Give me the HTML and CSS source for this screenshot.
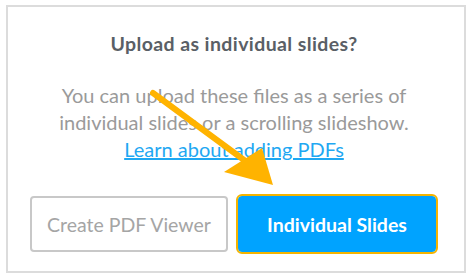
FILE: index.html
```html
<!DOCTYPE html>
<html lang="en">
  <head>
    <meta charset="UTF-8" />
    <meta name="viewport" content="width=device-width, initial-scale=1.0" />
    <title>Upload as individual slides?</title>

    <link rel="stylesheet" href="styles.css">
  </head>
  <body>
    <div class="dialog">
      <h2 class="title">Upload as individual slides?</h2>
      <p class="message">
        You can upload these files as a series of<br />
        individual slides or a scrolling slideshow.<br />
        <a href="#" class="link">Learn about adding PDFs</a>
      </p>
      <div class="actions">
        <button class="btn secondary">Create PDF Viewer</button>
        <button class="btn primary">Individual Slides</button>
      </div>

      <!-- annotation arrow -->
      <svg class="arrow" width="472" height="280" viewBox="0 0 472 280">
        <line x1="153" y1="93" x2="244" y2="160" stroke="#ffb300" stroke-width="6" stroke-linecap="round" />
        <polygon points="224,172 262,148 273,185" fill="#ffb300" />
      </svg>
    </div>
  </body>
</html>
```

FILE: styles.css
```css
* {
  margin: 0;
  padding: 0;
  box-sizing: border-box;
}

body {
  font-family: Lato, 'Open Sans', sans-serif;
  background-color: #fff;
  width: 472px;
  height: 280px;
  padding: 5px 6px 7px 6px;
}

.dialog {
  width: 460px;
  height: 268px;
  border: 2px solid #dcdcdc;
  display: flex;
  flex-direction: column;
  align-items: center;
  padding-top: 26px;
}

.title {
  font-size: 19.5px;
  font-weight: 700;
  letter-spacing: 0.4px;
  color: #5a5f66;
  line-height: 22px;
  margin-bottom: 27px;
  margin-right: 4px;
}

.message {
  font-size: 20px;
  color: #9a9a9a;
  line-height: 27px;
  text-align: center;
  margin-right: 4px;
}

.link {
  color: #1fa8f2;
  text-decoration: underline;
}

.actions {
  display: flex;
  gap: 10px;
  align-items: center;
  margin-top: 33px;
  margin-right: 6px;
}

.btn {
  font-family: Lato, 'Open Sans', sans-serif;
  width: 198px;
  height: 56px;
  border-radius: 4px;
  font-size: 19.5px;
  cursor: pointer;

  &.secondary {
    background-color: #fff;
    border: 2px solid #c8c8c8;
    color: #a5a5a5;
  }

  &.primary {
    background-color: #00a3ff;
    border: none;
    color: #fff;
    font-weight: 700;
    outline: 2px solid #f5b400;
    outline-offset: 0;
  }
}

.arrow {
  position: absolute;
  left: 0;
  top: 0;
  pointer-events: none;
}
```
